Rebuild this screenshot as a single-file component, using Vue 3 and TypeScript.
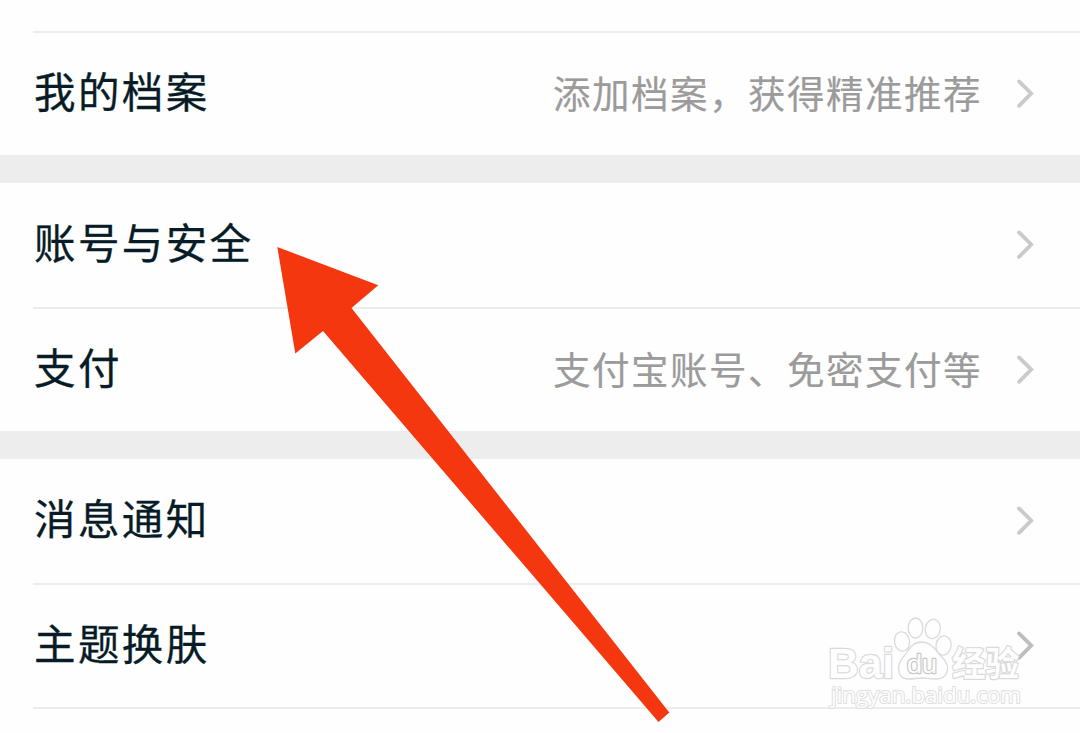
<script setup lang="ts">
interface Row {
  label: string
  note?: string
  dim?: boolean
}

const groups: Row[][] = [
  [{ label: '我的档案', note: '添加档案，获得精准推荐' }],
  [{ label: '账号与安全' }, { label: '支付', note: '支付宝账号、免密支付等' }],
  [{ label: '消息通知' }, { label: '主题换肤', dim: true }],
]
</script>

<template>
  <main class="screen">
    <div class="top"></div>
    <section v-for="(rows, g) in groups" :key="g" class="group">
      <div v-for="row in rows" :key="row.label" class="row">
        <span class="label">{{ row.label }}</span>
        <span class="note">{{ row.note }}</span>
        <svg class="chevron" :class="{ dim: row.dim }" width="20" height="32" viewBox="0 0 20 32">
          <path d="M4 3.4 L16.2 15.5 L4 27.8" />
        </svg>
      </div>
    </section>
    <div class="tail"></div>

    <svg class="watermark" width="240" height="120" viewBox="810 600 240 120">
      <g class="mark">
        <text class="brand" x="828" y="677.5" textLength="66" lengthAdjust="spacingAndGlyphs">Bai</text>
        <ellipse cx="902" cy="641.5" rx="7.5" ry="9.7" transform="rotate(-10 902 641.5)" />
        <ellipse cx="915.5" cy="628" rx="7.3" ry="10" />
        <ellipse cx="932.8" cy="629" rx="7.5" ry="9.7" transform="rotate(10 932.8 629)" />
        <ellipse cx="943.5" cy="645.5" rx="7.5" ry="9.7" transform="rotate(8 943.5 645.5)" />
        <path d="M922 642 C930 642 935 648 939 654 C943 659 947.5 661 947.5 668 C947.5 676 942 679 935 679 C929 679 927 678 922 678 C917 678 914 679 909 679 C902 679 898.5 675 898.5 668 C898.5 661 903 658 907 652 C911 646 914 642 922 642 Z" />
        <text class="du" x="907" y="673" textLength="30" lengthAdjust="spacingAndGlyphs">du</text>
        <text class="cn" x="952" y="675.5" textLength="67" lengthAdjust="spacingAndGlyphs">经验</text>
        <text class="url" x="831" y="703" textLength="190" lengthAdjust="spacingAndGlyphs">jingyan.baidu.com</text>
      </g>
    </svg>

    <svg class="arrow" width="400" height="480" viewBox="270 245 400 480">
      <path d="M277.3 247 L378.3 285.2 L351.5 308 L669.3 712.5 L658.5 722 L323 331 L295.3 353.5 Z" />
    </svg>
  </main>
</template>

<style>
body {
  margin: 0;
  background: #fefefe;
}
</style>

<style scoped>
.screen {
  position: relative;
  display: flex;
  flex-direction: column;
  width: 1080px;
  height: 733px;
  overflow: hidden;
  background: #fefefe;
  font-family: "Noto Sans CJK SC", "Liberation Sans", sans-serif;
}
.top {
  height: 31px;
  flex: none;
  margin-left: 33px;
  border-bottom: 2px solid #ececec;
}
.group + .group {
  border-top: 28px solid #ededed;
}
.row {
  display: flex;
  align-items: center;
  box-sizing: border-box;
  height: 122px;
  margin-left: 33px;
  padding-right: 45px;
}
.row + .row {
  border-top: 2px solid #ececec;
  height: 124px;
}
.group + .group .row:first-child {
  height: 124px;
}
.label {
  font-size: 41.5px;
  line-height: 60px;
  padding: 0 0 8px 1px;
  letter-spacing: 2.4px;
  color: #071c26;
  -webkit-text-stroke: 0.3px #071c26;
  white-space: nowrap;
}
.note {
  flex: 1;
  margin-right: 33px;
  padding-bottom: 5px;
  text-align: right;
  font-size: 37.5px;
  line-height: 56px;
  letter-spacing: 1.5px;
  color: #9b9b9b;
  -webkit-text-stroke: 0.2px #9b9b9b;
  white-space: nowrap;
}
.chevron {
  flex: none;
}
.chevron path {
  fill: none;
  stroke: #cacaca;
  stroke-width: 3.8;
  stroke-linecap: round;
}
.chevron.dim path {
  stroke: #bdbdbd;
}
.tail {
  flex: 1;
  margin-left: 33px;
  border-top: 2px solid #ececec;
}
.watermark {
  position: absolute;
  left: 810px;
  top: 600px;
}
.mark {
  fill: #fefefe;
  stroke: #dadada;
  stroke-width: 1.3;
  stroke-linejoin: round;
}
.mark text {
  paint-order: stroke;
  stroke-width: 2.4;
}
.mark .brand {
  font: bold 43px "Liberation Sans", sans-serif;
}
.mark .du {
  font: 26px "Liberation Sans", sans-serif;
  stroke: #c8c8c8;
}
.mark .cn {
  font: bold 34px "Noto Sans CJK SC", sans-serif;
}
.mark .url {
  font: 21.5px "Open Sans", sans-serif;
  stroke: #dfdfdf;
  stroke-width: 2;
}
.arrow {
  position: absolute;
  left: 270px;
  top: 245px;
}
.arrow path {
  fill: #f53710;
}
</style>
